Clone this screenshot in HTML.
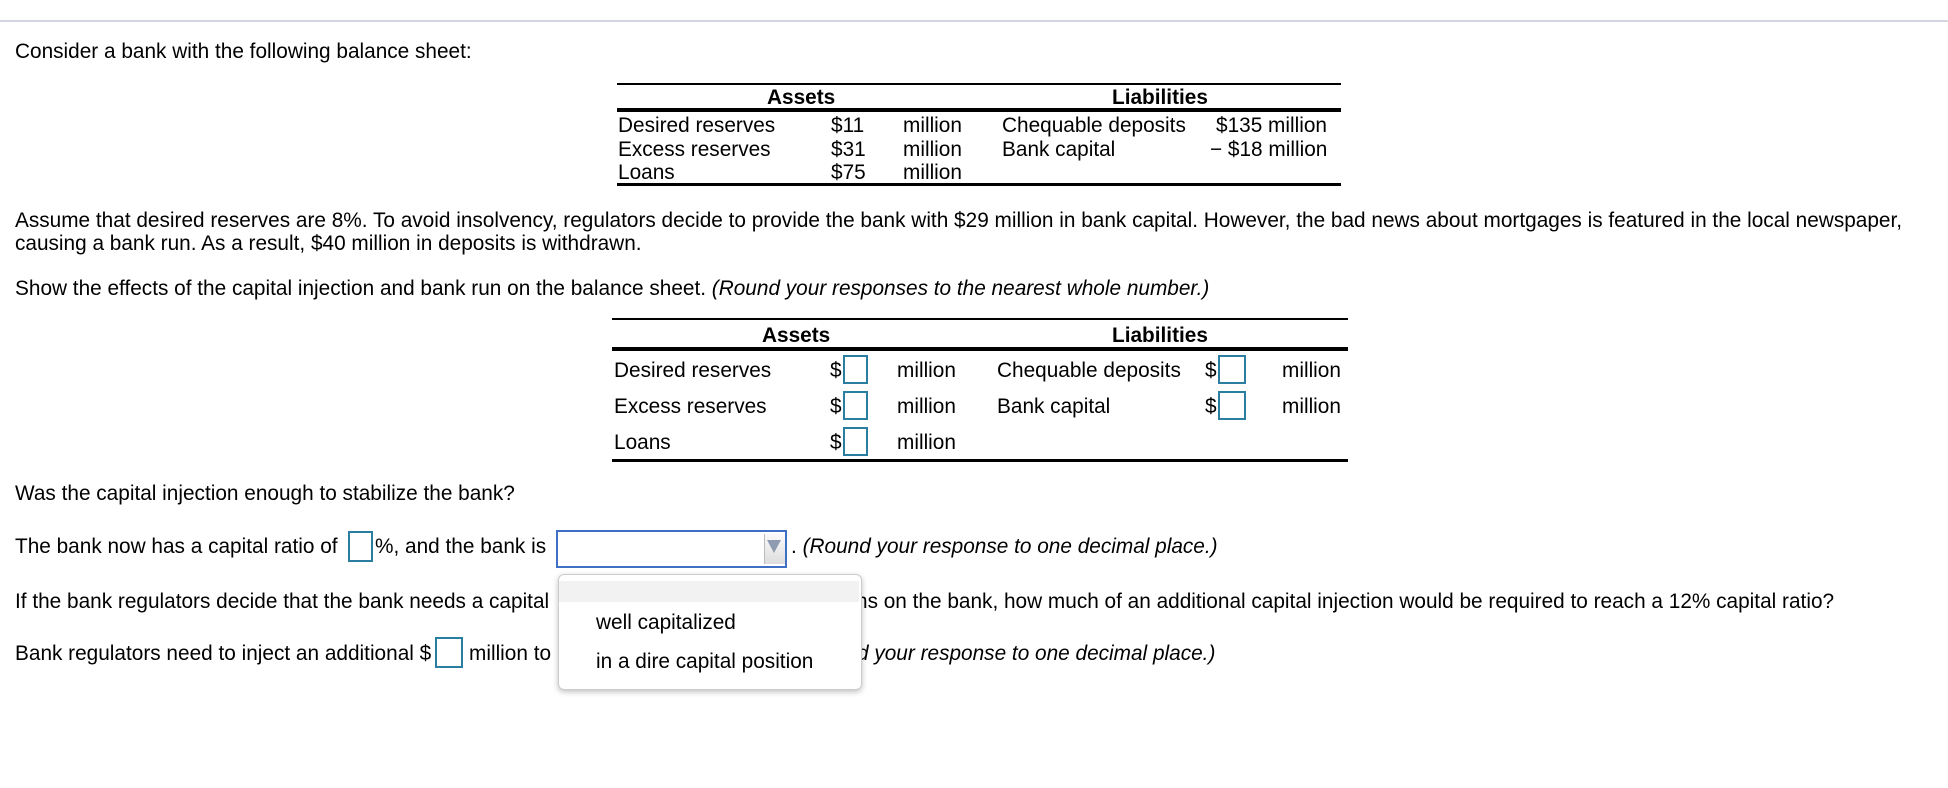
<!DOCTYPE html>
<html><head><meta charset="utf-8"><style>
body{margin:0;width:1948px;height:788px;background:#fff;position:relative;overflow:hidden;font-family:"Liberation Sans",Arial,sans-serif;font-size:20.8px;color:#000}
.t{position:absolute;white-space:nowrap;line-height:22px;margin-top:2px}
.l{position:absolute;background:#000}
.b{font-weight:bold}
.i{font-style:italic}
.box{position:absolute;border:2px solid #2a7fa0;background:#fff;box-sizing:border-box}
</style></head><body>
<div class="l" style="left:0;top:20px;width:1948px;height:2px;background:#d3d6e0"></div>
<div class="t" style="left:15px;top:39px">Consider a bank with the following balance sheet:</div>

<div class="l" style="left:617px;top:83px;width:724px;height:2px"></div>
<div class="t b" style="left:767px;top:85px">Assets</div>
<div class="t b" style="left:1112px;top:85px">Liabilities</div>
<div class="l" style="left:617px;top:108px;width:724px;height:4px"></div>
<div class="t" style="left:618px;top:113px">Desired reserves</div>
<div class="t" style="left:618px;top:137px">Excess reserves</div>
<div class="t" style="left:618px;top:160px">Loans</div>
<div class="t" style="left:831px;top:113px">$11</div>
<div class="t" style="left:831px;top:137px">$31</div>
<div class="t" style="left:831px;top:160px">$75</div>
<div class="t" style="left:903px;top:113px">million</div>
<div class="t" style="left:903px;top:137px">million</div>
<div class="t" style="left:903px;top:160px">million</div>
<div class="t" style="left:1002px;top:113px">Chequable deposits</div>
<div class="t" style="left:1002px;top:137px">Bank capital</div>
<div class="t" style="left:1216px;top:113px">$135 million</div>
<div class="t" style="left:1210px;top:137px">− $18 million</div>
<div class="l" style="left:617px;top:183px;width:724px;height:3px"></div>

<div class="t" style="left:15px;top:208px">Assume that desired reserves are 8%. To avoid insolvency, regulators decide to provide the bank with $29 million in bank capital. However, the bad news about mortgages is featured in the local newspaper,</div>
<div class="t" style="left:15px;top:231px">causing a bank run. As a result, $40 million in deposits is withdrawn.</div>
<div class="t" style="left:15px;top:276px">Show the effects of the capital injection and bank run on the balance sheet. <span class="i">(Round your responses to the nearest whole number.)</span></div>

<div class="l" style="left:612px;top:318px;width:736px;height:2px"></div>
<div class="t b" style="left:762px;top:323px">Assets</div>
<div class="t b" style="left:1112px;top:323px">Liabilities</div>
<div class="l" style="left:612px;top:347px;width:736px;height:4px"></div>
<div class="t" style="left:614px;top:358px">Desired reserves</div>
<div class="t" style="left:614px;top:394px">Excess reserves</div>
<div class="t" style="left:614px;top:430px">Loans</div>
<div class="t" style="left:830px;top:358px">$</div><div class="box" style="left:843px;top:355px;width:25px;height:29px"></div>
<div class="t" style="left:830px;top:394px">$</div><div class="box" style="left:843px;top:391px;width:25px;height:29px"></div>
<div class="t" style="left:830px;top:430px">$</div><div class="box" style="left:843px;top:427px;width:25px;height:29px"></div>
<div class="t" style="left:897px;top:358px">million</div>
<div class="t" style="left:897px;top:394px">million</div>
<div class="t" style="left:897px;top:430px">million</div>
<div class="t" style="left:997px;top:358px">Chequable deposits</div>
<div class="t" style="left:997px;top:394px">Bank capital</div>
<div class="t" style="left:1205px;top:358px">$</div><div class="box" style="left:1218px;top:355px;width:28px;height:29px"></div>
<div class="t" style="left:1205px;top:394px">$</div><div class="box" style="left:1218px;top:391px;width:28px;height:29px"></div>
<div class="t" style="left:1282px;top:358px">million</div>
<div class="t" style="left:1282px;top:394px">million</div>
<div class="l" style="left:612px;top:459px;width:736px;height:3px"></div>

<div class="t" style="left:15px;top:481px">Was the capital injection enough to stabilize the bank?</div>
<div class="t" style="left:15px;top:534px">The bank now has a capital ratio of</div>
<div class="box" style="left:348px;top:531px;width:25px;height:31px"></div>
<div class="t" style="left:375px;top:534px">%, and the bank is</div>
<div style="position:absolute;left:556px;top:530px;width:231px;height:38px;border:2px solid #3d6fc4;box-sizing:border-box;background:#fff"></div>
<div style="position:absolute;left:764px;top:534px;width:20px;height:30px;background:linear-gradient(#fafafa,#ddd);border-left:1px solid #bbb"></div>
<div style="position:absolute;left:767px;top:540px;width:0;height:0;border-left:7px solid transparent;border-right:7px solid transparent;border-top:13px solid #8e9bb0"></div>
<div class="t" style="left:791px;top:534px">. <span class="i">(Round your response to one decimal place.)</span></div>

<div class="t" style="left:15px;top:589px">If the bank regulators decide that the bank needs a capital</div>
<div class="t" style="left:856px;top:589px">ns on the bank, how much of an additional capital injection would be required to reach a 12% capital ratio?</div>
<div class="t" style="left:15px;top:641px">Bank regulators need to inject an additional $</div>
<div class="box" style="left:435px;top:637px;width:28px;height:31px"></div>
<div class="t" style="left:469px;top:641px">million to</div>
<div class="t i" style="left:857px;top:641px">d your response to one decimal place.)</div>

<div style="position:absolute;left:558px;top:574px;width:302px;height:114px;background:#fff;border:1px solid #ccc;border-radius:6px;box-shadow:0 2px 6px rgba(0,0,0,.25)"></div>
<div style="position:absolute;left:559px;top:581px;width:300px;height:21px;background:#f2f2f2"></div>
<div class="t" style="left:596px;top:610px">well capitalized</div>
<div class="t" style="left:596px;top:649px">in a dire capital position</div>
</body></html>
